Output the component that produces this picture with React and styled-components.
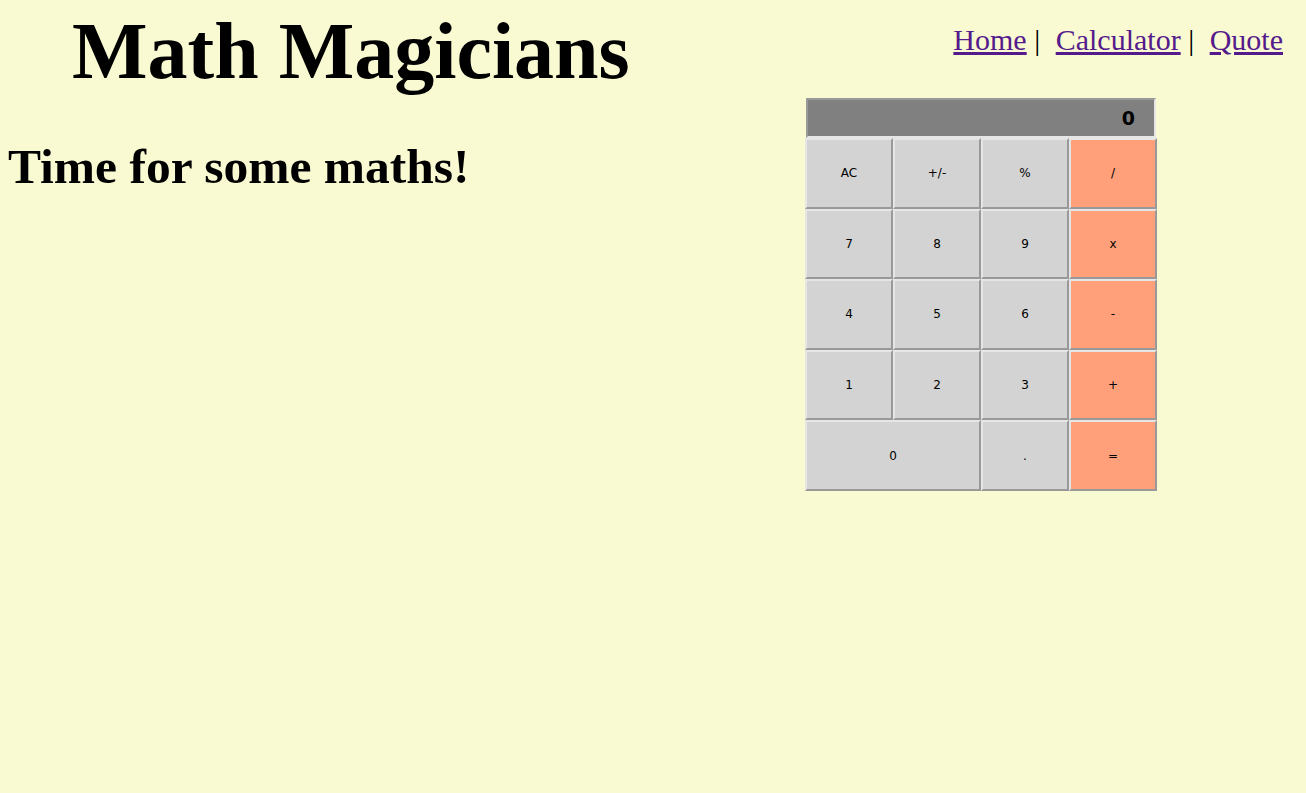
import React from 'react';
import styled, { createGlobalStyle } from 'styled-components';

const GlobalStyle = createGlobalStyle`
  html, body {
    margin: 0;
    padding: 0;
    background: #fafad2;
  }
  body {
    font-family: "Liberation Serif", "Times New Roman", serif;
    color: #000;
  }
`;

const Page = styled.div`
  padding: 8px;
  min-height: 777px;
`;

const Header = styled.header`
  display: flex;
  justify-content: space-between;
  align-items: flex-start;
`;

const Title = styled.h1`
  margin: 0 0 0 64px;
  font-size: 80px;
  font-weight: bold;
  line-height: 86px;
`;

const Nav = styled.nav`
  display: flex;
  align-items: baseline;
  margin: 15px 15px 0 0;
  font-size: 30px;
  line-height: normal;
`;

const NavLink = styled.a`
  color: #551a8b;
  text-decoration: underline;
  cursor: pointer;
`;

const Sep = styled.span`
  margin: 0 15.5px 0 7.5px;
  color: #000;
`;

const Main = styled.main`
  display: flex;
  justify-content: space-between;
  align-items: flex-start;
  margin-top: 4px;
`;

const Heading = styled.h2`
  margin: 40px 0 0 0;
  font-size: 49.5px;
  font-weight: bold;
  line-height: normal;
`;

const Calculator = styled.div`
  display: grid;
  grid-template-columns: repeat(4, 88px);
  grid-template-rows: 40px repeat(5, 70.6px);
  margin-right: 141px;
  font-family: "DejaVu Sans", Verdana, sans-serif;
`;

const Display = styled.div`
  grid-column: 1 / -1;
  margin: 0 1px;
  box-sizing: border-box;
  background: #808080;
  border-style: solid;
  border-width: 2px;
  border-color: #999 #e6e6e6 #e6e6e6 #999;
  display: flex;
  align-items: center;
  justify-content: flex-end;
  padding-right: 19px;
  font-size: 19px;
  font-weight: bold;
  color: #000;
`;

const Key = styled.button`
  box-sizing: border-box;
  grid-column: span ${(p) => p.$span || 1};
  margin: 0;
  padding: 0;
  border-style: solid;
  border-width: 2px;
  border-color: #e6e6e6 #999 #999 #e6e6e6;
  background: ${(p) => (p.$op ? '#ffa07a' : '#d3d3d3')};
  font-family: "DejaVu Sans", Verdana, sans-serif;
  font-size: 12px;
  color: #000;
  cursor: pointer;
`;

const keys = [
  ['AC'], ['+/-'], ['%'], ['/', true],
  ['7'], ['8'], ['9'], ['x', true],
  ['4'], ['5'], ['6'], ['-', true],
  ['1'], ['2'], ['3'], ['+', true],
  ['0', false, 2], ['.'], ['=', true],
];

export default function App() {
  return (
    <>
      <GlobalStyle />
      <Page>
        <Header>
          <Title>Math Magicians</Title>
          <Nav>
            <NavLink href="#home">Home</NavLink>
            <Sep>|</Sep>
            <NavLink href="#calculator">Calculator</NavLink>
            <Sep>|</Sep>
            <NavLink href="#quote">Quote</NavLink>
          </Nav>
        </Header>
        <Main>
          <Heading>Time for some maths!</Heading>
          <Calculator>
            <Display>0</Display>
            {keys.map(([label, op, span]) => (
              <Key key={label} $op={op} $span={span} type="button">
                {label}
              </Key>
            ))}
          </Calculator>
        </Main>
      </Page>
    </>
  );
}
